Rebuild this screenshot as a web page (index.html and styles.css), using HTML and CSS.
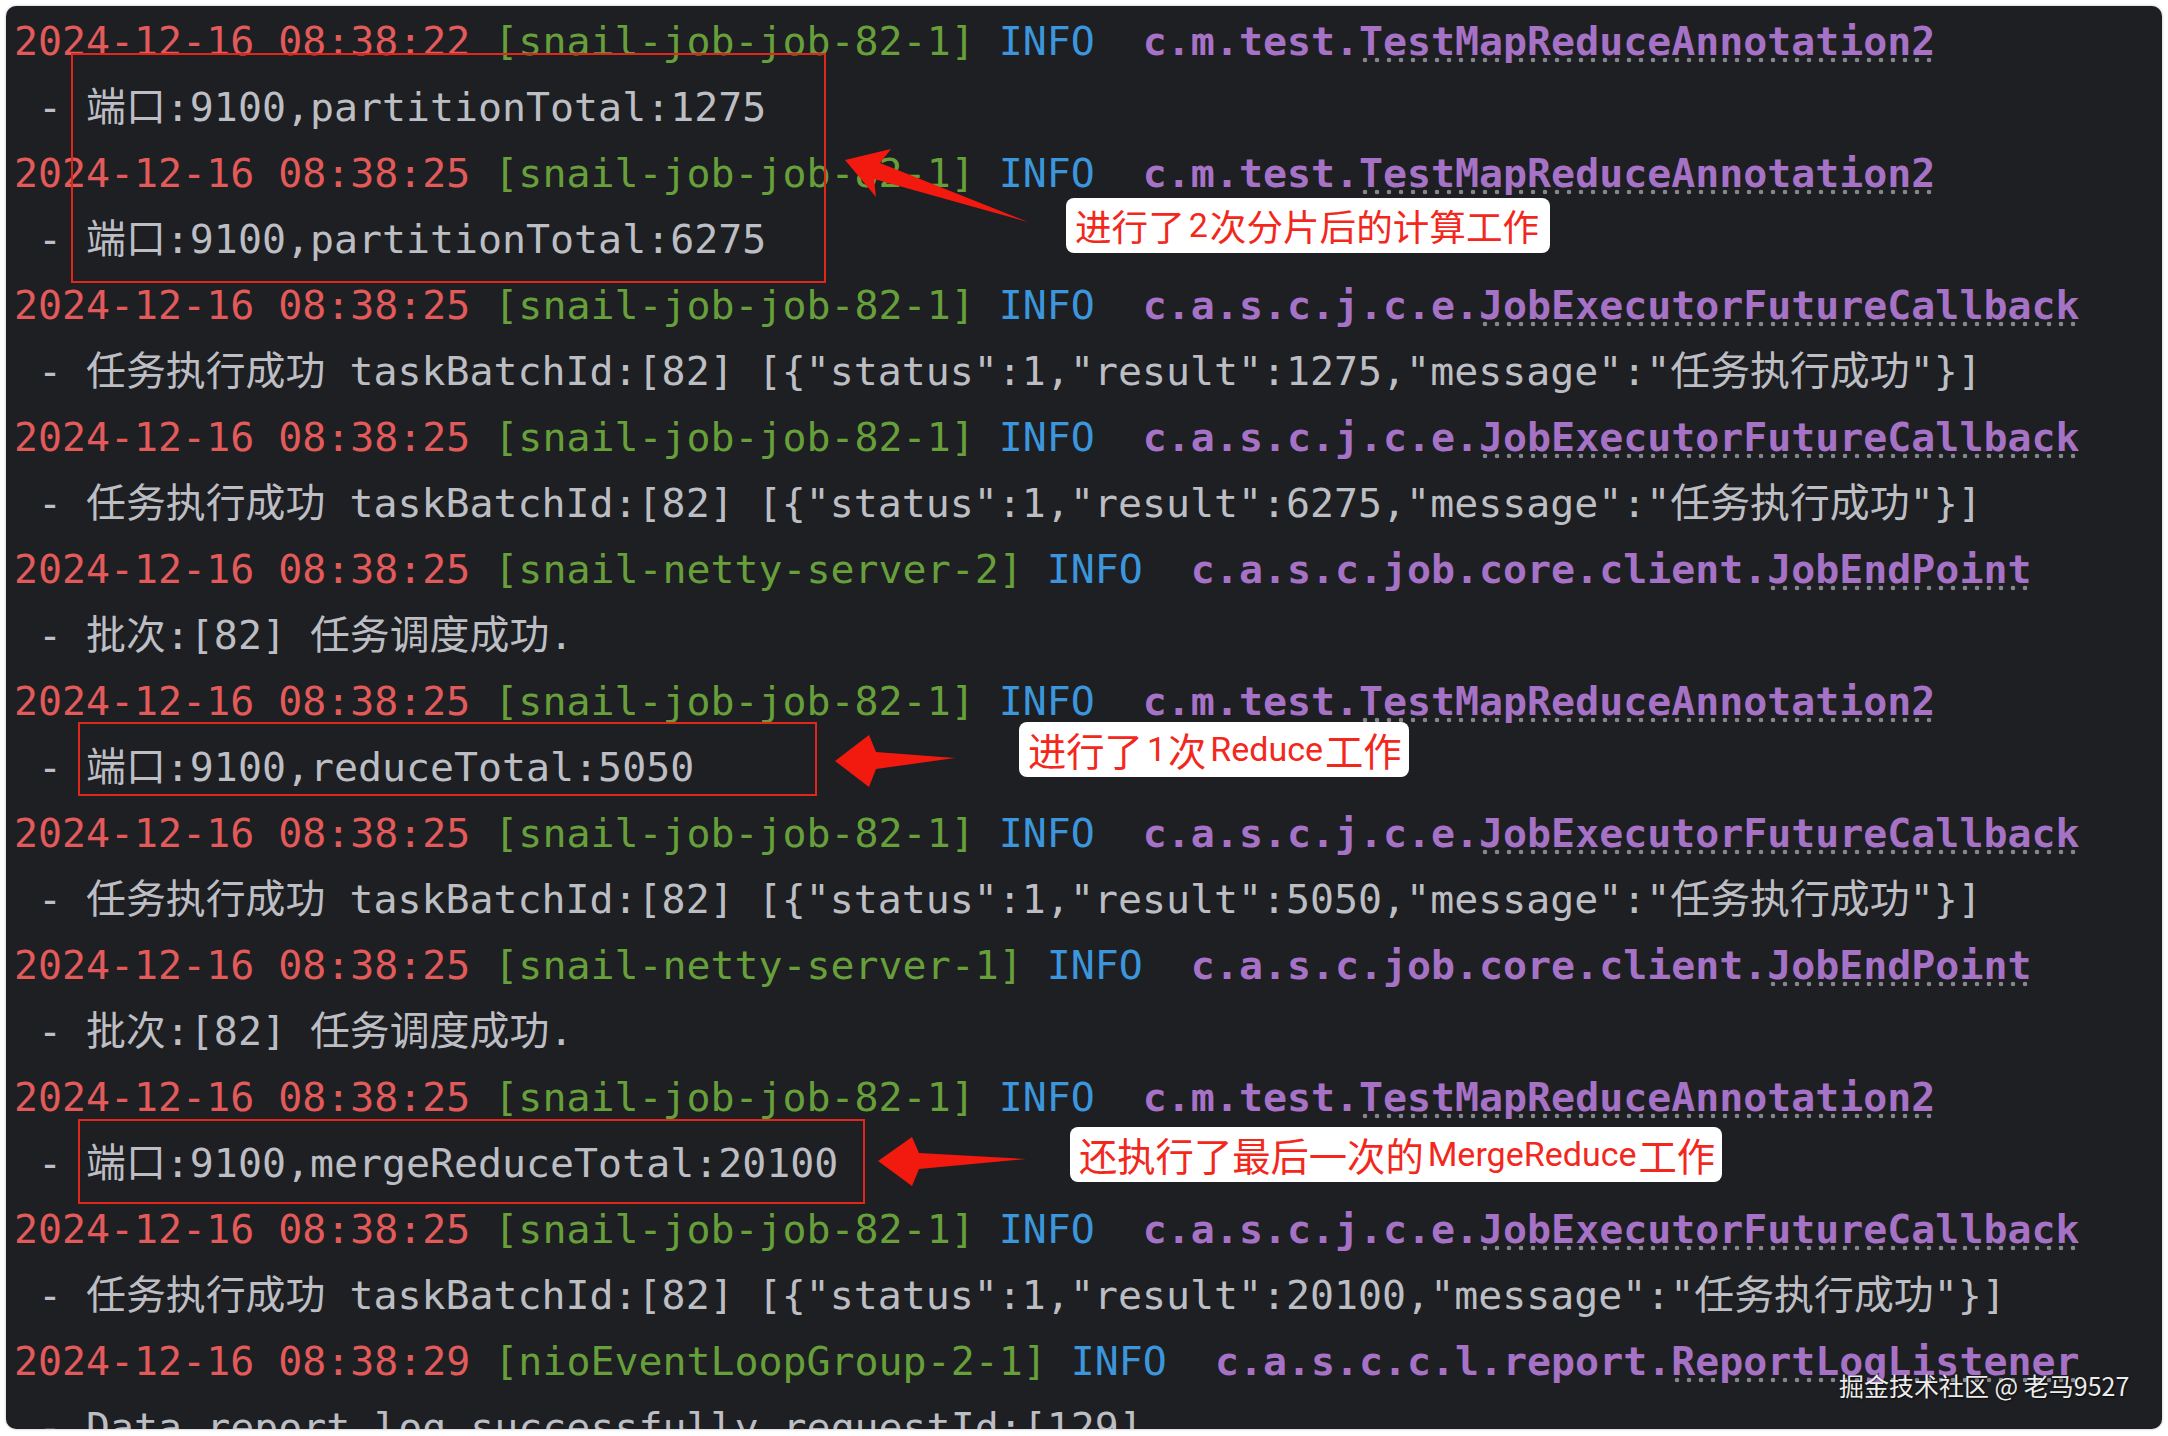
FILE: index.html
```html
<!DOCTYPE html>
<html lang="zh-CN">
<head>
<meta charset="utf-8">
<title>snail-job log</title>
<link rel="stylesheet" href="styles.css">
</head>
<body>
<div class="page">
  <div class="console">
    <div class="log">
      <div class="ln"><span class="ts">2024-12-16 08:38:22</span> <span class="th">[snail-job-job-82-1]</span> <span class="lv">INFO</span>  <span class="lg">c.m.test.<span class="cls">TestMapReduceAnnotation2</span></span></div>
      <div class="ln msg"> - 端口:9100,partitionTotal:1275</div>
      <div class="ln"><span class="ts">2024-12-16 08:38:25</span> <span class="th">[snail-job-job-82-1]</span> <span class="lv">INFO</span>  <span class="lg">c.m.test.<span class="cls">TestMapReduceAnnotation2</span></span></div>
      <div class="ln msg"> - 端口:9100,partitionTotal:6275</div>
      <div class="ln"><span class="ts">2024-12-16 08:38:25</span> <span class="th">[snail-job-job-82-1]</span> <span class="lv">INFO</span>  <span class="lg">c.a.s.c.j.c.e.<span class="cls">JobExecutorFutureCallback</span></span></div>
      <div class="ln msg"> - 任务执行成功 taskBatchId:[82] [{"status":1,"result":1275,"message":"任务执行成功"}]</div>
      <div class="ln"><span class="ts">2024-12-16 08:38:25</span> <span class="th">[snail-job-job-82-1]</span> <span class="lv">INFO</span>  <span class="lg">c.a.s.c.j.c.e.<span class="cls">JobExecutorFutureCallback</span></span></div>
      <div class="ln msg"> - 任务执行成功 taskBatchId:[82] [{"status":1,"result":6275,"message":"任务执行成功"}]</div>
      <div class="ln"><span class="ts">2024-12-16 08:38:25</span> <span class="th">[snail-netty-server-2]</span> <span class="lv">INFO</span>  <span class="lg">c.a.s.c.job.core.client.<span class="cls">JobEndPoint</span></span></div>
      <div class="ln msg"> - 批次:[82] 任务调度成功.</div>
      <div class="ln"><span class="ts">2024-12-16 08:38:25</span> <span class="th">[snail-job-job-82-1]</span> <span class="lv">INFO</span>  <span class="lg">c.m.test.<span class="cls">TestMapReduceAnnotation2</span></span></div>
      <div class="ln msg"> - 端口:9100,reduceTotal:5050</div>
      <div class="ln"><span class="ts">2024-12-16 08:38:25</span> <span class="th">[snail-job-job-82-1]</span> <span class="lv">INFO</span>  <span class="lg">c.a.s.c.j.c.e.<span class="cls">JobExecutorFutureCallback</span></span></div>
      <div class="ln msg"> - 任务执行成功 taskBatchId:[82] [{"status":1,"result":5050,"message":"任务执行成功"}]</div>
      <div class="ln"><span class="ts">2024-12-16 08:38:25</span> <span class="th">[snail-netty-server-1]</span> <span class="lv">INFO</span>  <span class="lg">c.a.s.c.job.core.client.<span class="cls">JobEndPoint</span></span></div>
      <div class="ln msg"> - 批次:[82] 任务调度成功.</div>
      <div class="ln"><span class="ts">2024-12-16 08:38:25</span> <span class="th">[snail-job-job-82-1]</span> <span class="lv">INFO</span>  <span class="lg">c.m.test.<span class="cls">TestMapReduceAnnotation2</span></span></div>
      <div class="ln msg"> - 端口:9100,mergeReduceTotal:20100</div>
      <div class="ln"><span class="ts">2024-12-16 08:38:25</span> <span class="th">[snail-job-job-82-1]</span> <span class="lv">INFO</span>  <span class="lg">c.a.s.c.j.c.e.<span class="cls">JobExecutorFutureCallback</span></span></div>
      <div class="ln msg"> - 任务执行成功 taskBatchId:[82] [{"status":1,"result":20100,"message":"任务执行成功"}]</div>
      <div class="ln"><span class="ts">2024-12-16 08:38:29</span> <span class="th">[nioEventLoopGroup-2-1]</span> <span class="lv">INFO</span>  <span class="lg">c.a.s.c.c.l.report.<span class="cls">ReportLogListener</span></span></div>
      <div class="ln msg"> - Data report log successfully requestId:[129]</div>
    </div>
  </div>

  <svg class="marks" width="2168" height="1436" viewBox="0 0 2168 1436" xmlns="http://www.w3.org/2000/svg">
    <g fill="none" stroke="#e1261c" stroke-width="2">
      <rect x="72" y="54" width="753" height="228"/>
      <rect x="79" y="723" width="737" height="72"/>
      <rect x="79" y="1120" width="785" height="83"/>
    </g>
    <g fill="#f2190f">
      <polygon points="845,160 891,149 880,163 1028,222 874,179 876,197"/>
      <polygon points="835,761 869,735 876,752 955,758 876,769 869,787"/>
      <polygon points="878,1161 912,1137 919,1153 1026,1159 919,1169 912,1186"/>
    </g>
  </svg>

  <div class="note note1">进行了<span class="lat">2</span>次分片后的计算工作</div>
  <div class="note note2">进行了<span class="lat">1</span>次<span class="lat">Reduce</span>工作</div>
  <div class="note note3">还执行了最后一次的<span class="lat">MergeReduce</span>工作</div>

  <div class="wm">掘金技术社区 @ 老马9527</div>
</div>
</body>
</html>
```

FILE: styles.css
```css
html, body {
  margin: 0;
  padding: 0;
  background: #ffffff;
}

.page {
  position: relative;
  width: 2168px;
  height: 1436px;
  padding: 6px;
  box-sizing: border-box;
}

.console {
  width: 2156px;
  height: 1423px;
  background: #1e1f22;
  border-radius: 10px;
  overflow: hidden;
  box-shadow: 0 0 3px rgba(0, 0, 0, 0.28);
}

.log {
  padding: 2px 0 0 8px;
  font-family: "DejaVu Sans Mono", "Noto Sans CJK SC", monospace;
  font-size: 39.9px;
  color: #bcbec4;
}

.ln {
  height: 66px;
  line-height: 66px;
  white-space: pre;
}

.ts { color: #e35a5a; }
.th { color: #67a03a; }
.lv { color: #3b96dc; }
.lg {
  color: #a672c6;
  font-weight: bold;
}

.cls {
  background-image: radial-gradient(circle, #86878c 2px, rgba(0, 0, 0, 0) 2.6px);
  background-size: 12px 6px;
  background-repeat: repeat-x;
  background-position: 0 calc(100% - 1.5px);
}

.marks {
  position: absolute;
  left: 0;
  top: 0;
  pointer-events: none;
}

.note {
  position: absolute;
  height: 55px;
  box-sizing: border-box;
  padding: 0 0 0 9px;
  background: #ffffff;
  border-radius: 8px;
  color: #f2281d;
  font-family: "Noto Sans CJK SC", sans-serif;
  font-size: 38.3px;
  line-height: 55px;
  white-space: nowrap;
  display: flex;
  align-items: center;
}

.note .lat {
  font-family: Roboto, "Noto Sans", sans-serif;
  font-size: 34px;
  margin: 0 2px 0 4px;
}

.note1 { left: 1066px; top: 198px; width: 484px; font-size: 36.6px; }
.note2 { left: 1019px; top: 722px; width: 390px; }
.note3 { left: 1070px; top: 1127px; width: 652px; }

.wm {
  position: absolute;
  left: 1839px;
  top: 1367px;
  font-family: "Noto Sans CJK SC", sans-serif;
  font-size: 25px;
  line-height: 36px;
  color: #ececec;
  text-shadow: 1px 1px 2px rgba(0, 0, 0, 0.7);
  white-space: nowrap;
}
```
